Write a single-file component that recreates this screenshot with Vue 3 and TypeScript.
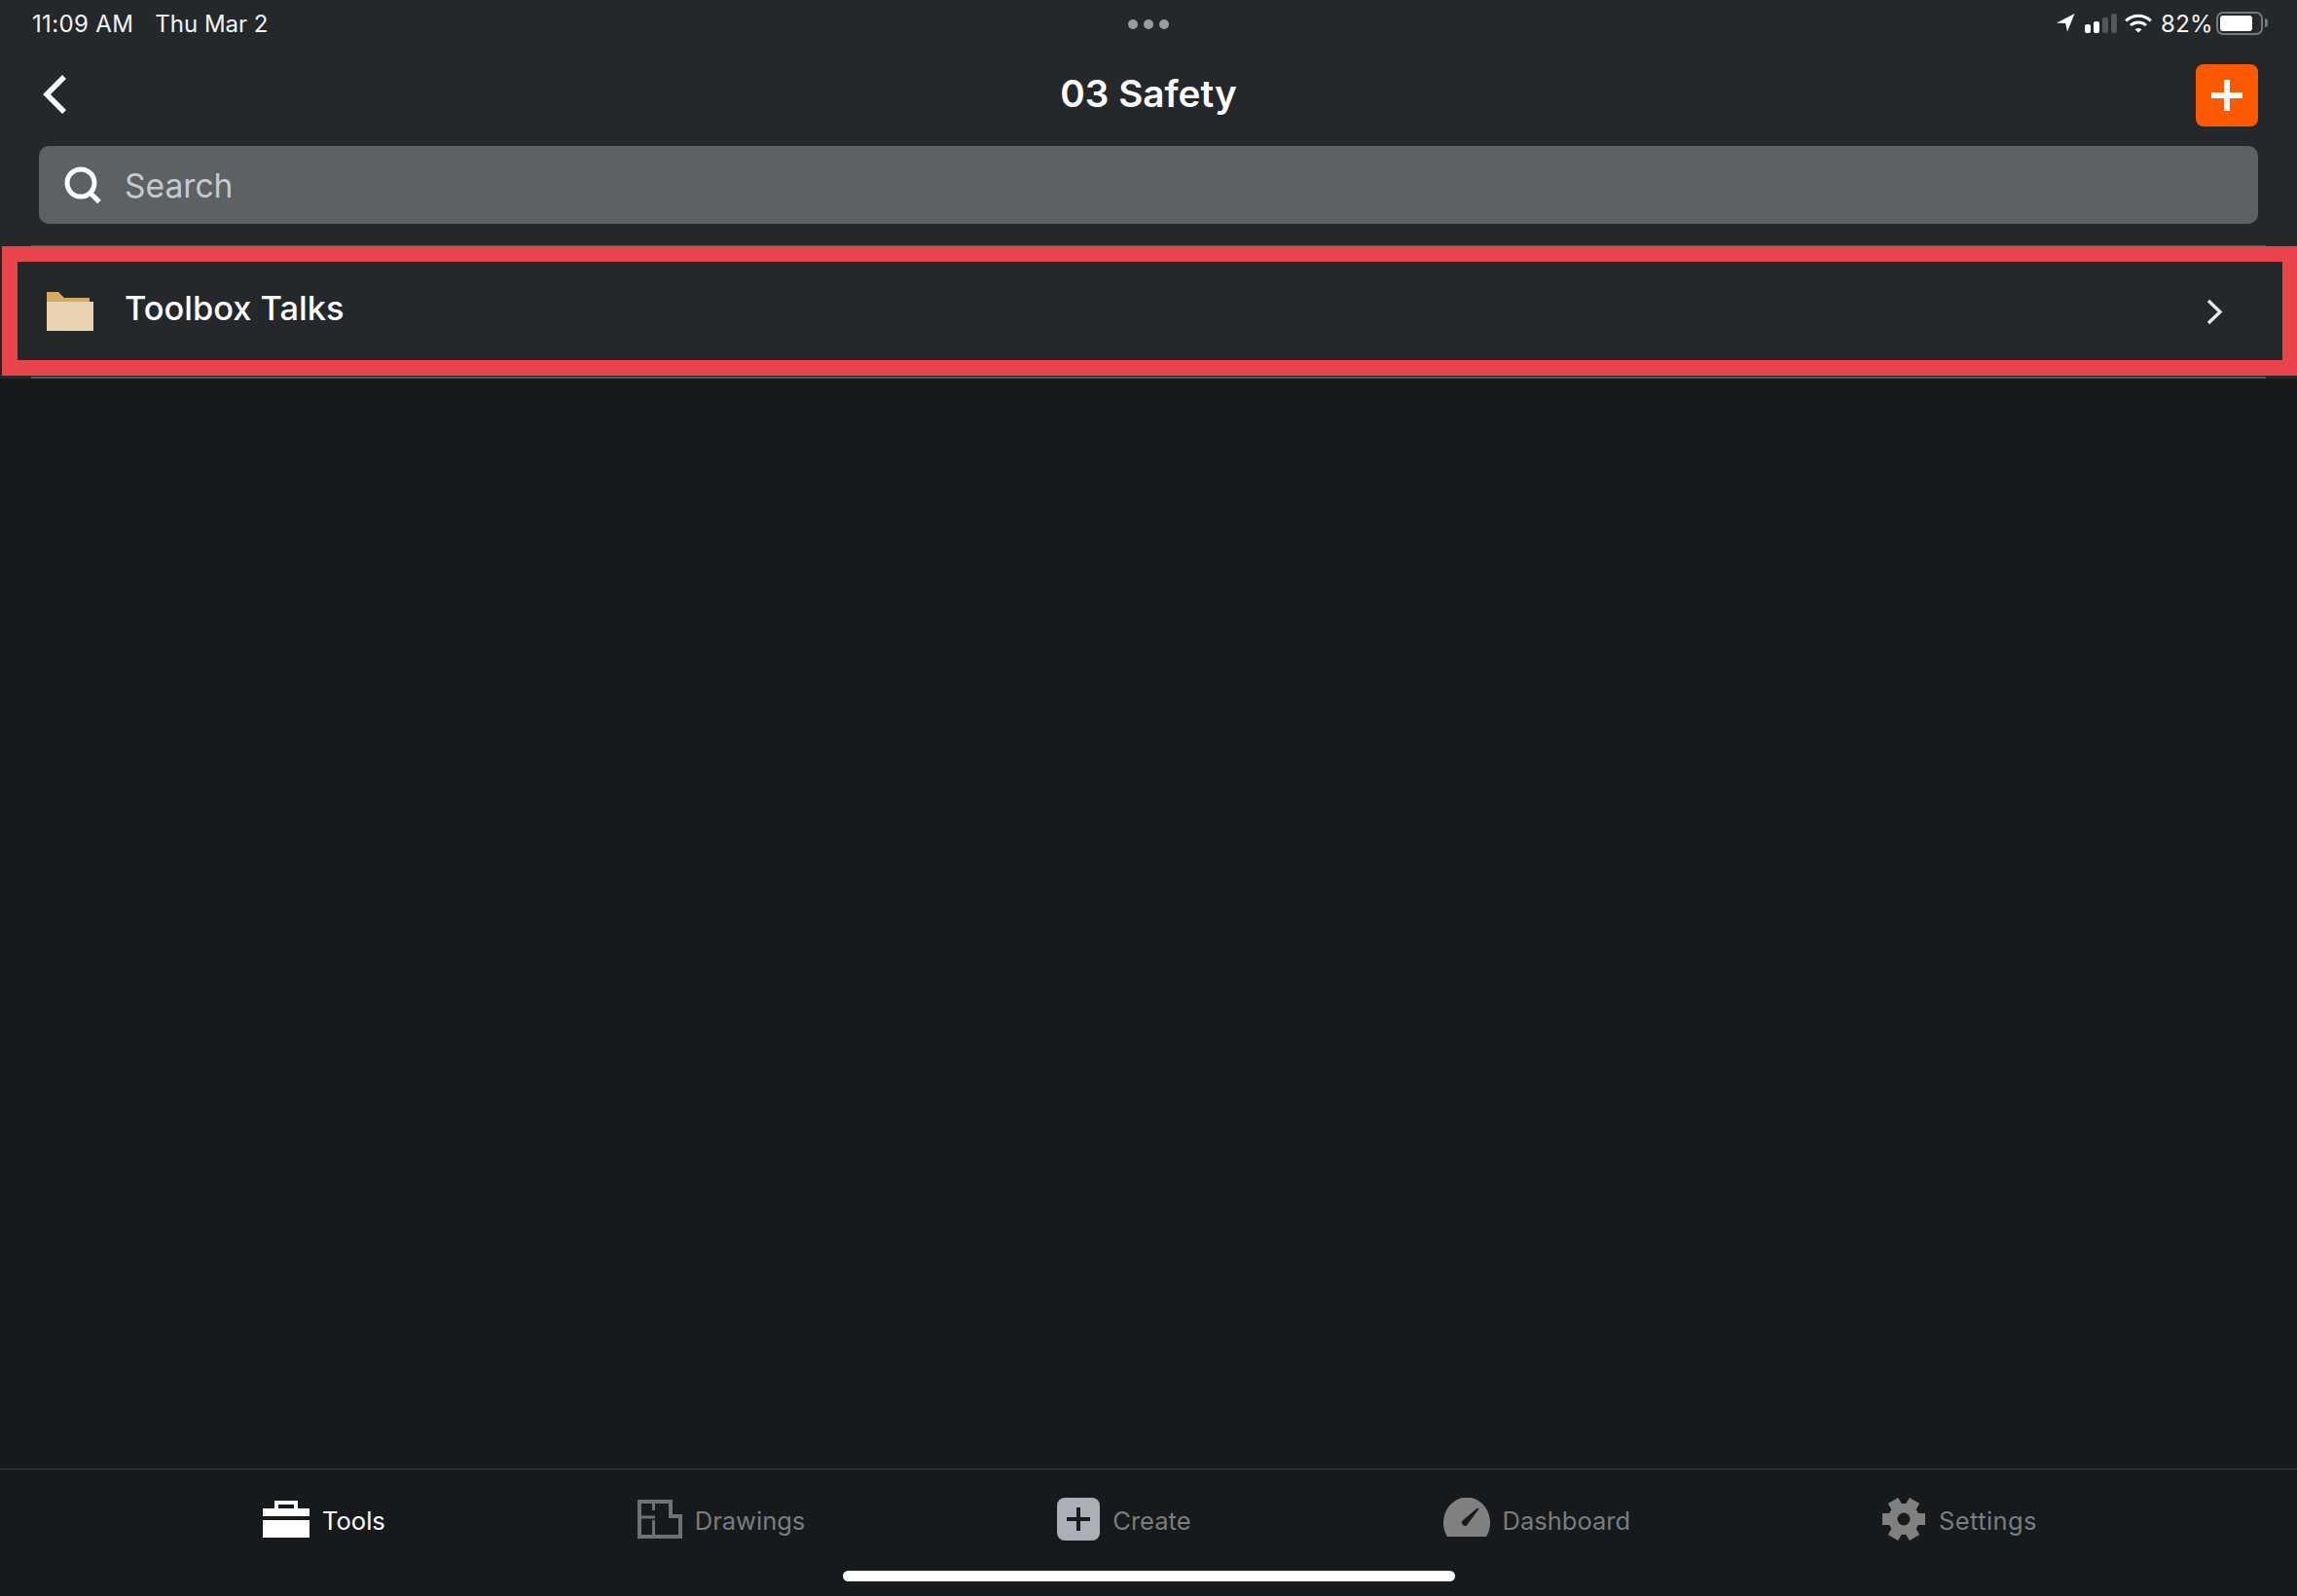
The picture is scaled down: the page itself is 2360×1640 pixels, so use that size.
<script setup lang="ts">
// Static tab list, active tab gets the white treatment
interface Tab {
  key: string;
  label: string;
}

const tabs: Tab[] = [
  { key: "tools", label: "Tools" },
  { key: "drawings", label: "Drawings" },
  { key: "create", label: "Create" },
  { key: "dashboard", label: "Dashboard" },
  { key: "settings", label: "Settings" },
];
const activeTab = "tools";
const gearTeeth = [0, 60, 120];
const signalBars = [9, 12, 16, 20];
</script>

<template>
  <div class="page">
    <header class="top">
      <div class="status">
        <div class="status-left">
          <span class="time">11:09 AM</span>
          <span>Thu Mar 2</span>
        </div>
        <div class="dots"><i /><i /><i /></div>
        <div class="status-right">
          <svg class="arrow" width="19" height="19" viewBox="0 0 19 19">
            <path d="M0 9.5 18.5 0 11 18.5 9.2 10Z" fill="#fff" />
          </svg>
          <div class="signal">
            <span
              v-for="(h, i) in signalBars"
              :key="i"
              class="bar"
              :class="{ dim: i > 1 }"
              :style="{ height: h + 'px' }"
            />
          </div>
          <svg class="wifi" width="28" height="20" viewBox="0 0 28 20" fill="none" stroke="#fff" stroke-width="3">
            <path d="M1.2 7.4C8.4 .6 19.6 .6 26.8 7.4" />
            <path d="M6 12C10.5 7.9 17.5 7.9 22 12" />
            <path d="M10.6 16.2C12.5 14.6 15.5 14.6 17.4 16.2L14 19.6Z" fill="#fff" stroke="none" />
          </svg>
          <span class="percent">82%</span>
          <div class="battery"><div class="battery-fill" /></div>
          <div class="battery-nub" />
        </div>
      </div>

      <nav class="nav">
        <svg class="back" width="25" height="40" viewBox="0 0 25 40" fill="none" stroke="#fff" stroke-width="5.5">
          <path d="M22 2 4 20 22 38" />
        </svg>
        <h1 class="title">03 Safety</h1>
        <button class="add" type="button">
          <svg width="32" height="32" viewBox="0 0 32 32" fill="#fff">
            <rect x="13" y="0" width="6" height="32" />
            <rect x="0" y="13" width="32" height="6" />
          </svg>
        </button>
      </nav>

      <div class="search">
        <svg width="38" height="38" viewBox="0 0 38 38" fill="none" stroke="#fff">
          <circle cx="17" cy="17" r="14" stroke-width="5" />
          <path d="M26.5 27 36 36.5" stroke-width="5" />
        </svg>
        <span class="search-text">Search</span>
      </div>

      <div class="list">
        <div class="row">
          <svg class="folder" width="48" height="40" viewBox="0 0 48 40">
            <path d="M0 0H12L18 6H44V12H0Z" fill="#d4aa64" />
            <rect x="0" y="10" width="48" height="30" fill="#ead4b0" />
          </svg>
          <span class="row-label">Toolbox Talks</span>
          <svg class="chevron" width="17" height="27" viewBox="0 0 17 27" fill="none" stroke="#e6e7e8" stroke-width="3.4">
            <path d="M2 2 14 13.5 2 25" />
          </svg>
          <div class="highlight" />
        </div>
      </div>
    </header>

    <main class="content" />

    <footer class="bottom">
      <div class="tabs">
        <div
          v-for="tab in tabs"
          :key="tab.key"
          class="tab"
          :class="[tab.key, { active: tab.key === activeTab }]"
        >
          <svg v-if="tab.key === 'tools'" width="48" height="38" viewBox="0 0 48 38" fill="#fff">
            <path fill-rule="evenodd" d="M12 0H36V8H48V16H0V8H12ZM16 4V8H32V4Z" />
            <rect x="0" y="20" width="48" height="18" />
          </svg>
          <svg v-else-if="tab.key === 'drawings'" width="46" height="40" viewBox="0 0 46 40" fill="none" stroke="#6f7173">
            <path d="M2 2H34V17H44V38H2Z" stroke-width="4" />
            <path d="M16.5 2V11M2 18H18M16.5 21V38" stroke-width="3" />
          </svg>
          <svg v-else-if="tab.key === 'create'" width="44" height="44" viewBox="0 0 44 44">
            <rect width="44" height="44" rx="8" fill="#abb0b7" />
            <path d="M22 10V34M10 22H34" stroke="#171b1e" stroke-width="4" />
          </svg>
          <svg v-else-if="tab.key === 'dashboard'" class="gauge" width="48" height="40" viewBox="0 0 48 40">
            <path d="M4 40A24 26 0 1 1 44 40Z" fill="#808080" />
            <path d="M35 10.5 36.5 11.5 24.7 27.4A3.2 3.2 0 1 1 19.9 23.2Z" fill="#171b1e" />
          </svg>
          <svg v-else width="44" height="44" viewBox="0 0 44 44">
            <circle cx="22" cy="22" r="16" fill="#808080" />
            <rect
              v-for="deg in gearTeeth"
              :key="deg"
              x="0"
              y="16"
              width="44"
              height="12"
              fill="#808080"
              :transform="`rotate(${deg} 22 22)`"
            />
            <circle cx="22" cy="22" r="6.5" fill="#171b1e" />
          </svg>
          <span class="tab-label">{{ tab.label }}</span>
        </div>
      </div>
      <div class="home-bar" />
    </footer>
  </div>
</template>

<style>
html,
body {
  margin: 0;
  background: #161a1d;
}
</style>

<style scoped>
.page {
  width: 2360px;
  height: 1640px;
  display: flex;
  flex-direction: column;
  overflow: hidden;
  background: #161a1d;
  color: #fff;
  font-family: Inter, "Liberation Sans", sans-serif;
}

/* ─── Header block ───────────────────────────────────────────── */
.top {
  background: #25282b;
  height: 389px;
  flex: none;
  display: flex;
  flex-direction: column;
}

.status {
  height: 46px;
  padding: 0 30px;
  display: grid;
  grid-template-columns: 1fr auto 1fr;
  align-items: center;
  font-size: 24px;
  line-height: 36px;
}
.status-left {
  display: flex;
  gap: 22px;
  margin-left: 3px;
  padding-top: 3px;
  color: #f2f3f3;
}
.time {
  letter-spacing: 0.35px;
}
.dots {
  display: flex;
  gap: 6px;
  padding-top: 4px;
}
.dots i {
  width: 10px;
  height: 10px;
  border-radius: 50%;
  background: #9a9da0;
}
.status-right {
  display: flex;
  align-items: center;
  justify-content: flex-end;
  padding-top: 1px;
}
.signal {
  display: flex;
  align-items: flex-end;
  gap: 3px;
  height: 20px;
  margin: 0 8px 0 10px;
}
.bar {
  width: 6px;
  border-radius: 2px;
  background: #fff;
}
.bar.dim {
  background: #55585b;
}
.percent {
  width: 52px;
  margin: 0 5px 0 9px;
  padding-top: 2px;
  letter-spacing: 0.3px;
  white-space: nowrap;
  color: #f2f3f3;
}
.battery {
  width: 48px;
  height: 24px;
  box-sizing: border-box;
  border: 2px solid #76797b;
  border-radius: 7px;
  padding: 2px;
}
.battery-fill {
  width: 33px;
  height: 100%;
  background: #fff;
  border-radius: 3px;
}
.battery-nub {
  width: 3px;
  height: 9px;
  margin-left: 2px;
  background: #76797b;
  border-radius: 0 3px 3px 0;
}

.nav {
  height: 64px;
  padding: 20px 40px;
  display: grid;
  grid-template-columns: 1fr auto 1fr;
  align-items: center;
}
.back {
  margin-left: 4px;
  margin-top: -2px;
}
.title {
  margin: -3px 0 0;
  font-size: 38.7px;
  font-weight: 600;
  line-height: 1;
}
.add {
  justify-self: end;
  width: 64px;
  height: 64px;
  padding: 0;
  border: 0;
  border-radius: 8px;
  background: #ff5900;
  display: flex;
  align-items: center;
  justify-content: center;
}

.search {
  height: 80px;
  margin: 0 40px;
  padding-left: 26px;
  border-radius: 10px;
  background: #5c6164;
  display: flex;
  align-items: center;
  gap: 24px;
}
.search-text {
  font-size: 33.6px;
  color: #c6cacc;
}

.list {
  margin: 22px 32px 0;
}
.row {
  position: relative;
  height: 137px;
  box-sizing: border-box;
  border-top: 2px solid #55585b;
  border-bottom: 2px solid #55585b;
  padding: 0 44px 0 16px;
  display: flex;
  align-items: center;
}
.folder {
  flex: none;
  margin-top: -1px;
}
.row-label {
  margin: 0 0 8px 32px;
  flex: 1;
  font-size: 34.4px;
  font-weight: 500;
}
.highlight {
  position: absolute;
  left: -30px;
  right: -32px;
  top: -1px;
  height: 133px;
  box-sizing: border-box;
  border: 16px solid #ea454d;
  border-right-width: 15px;
}

.content {
  flex: 1;
}

/* ─── Tab bar ────────────────────────────────────────────────── */
.bottom {
  height: 131px;
  flex: none;
  box-sizing: border-box;
  border-top: 1px solid #3a3c3e;
  display: flex;
  flex-direction: column;
  align-items: center;
}
.tabs {
  height: 104px;
  padding: 29px 0 0 3px;
  box-sizing: border-box;
  display: flex;
  align-items: flex-start;
  justify-content: center;
  gap: 259px;
}
.tab {
  height: 44px;
  display: flex;
  align-items: center;
  gap: 13px;
  color: #7a7c7e;
  font-size: 25.5px;
}
.tab.active {
  color: #fff;
}
.tab.settings {
  letter-spacing: 0.4px;
  gap: 14px;
}
.tab-label {
  padding-top: 3px;
}
.gauge {
  margin-top: -4px;
}
.home-bar {
  width: 629px;
  height: 11px;
  border-radius: 6px;
  background: #fff;
}
</style>
